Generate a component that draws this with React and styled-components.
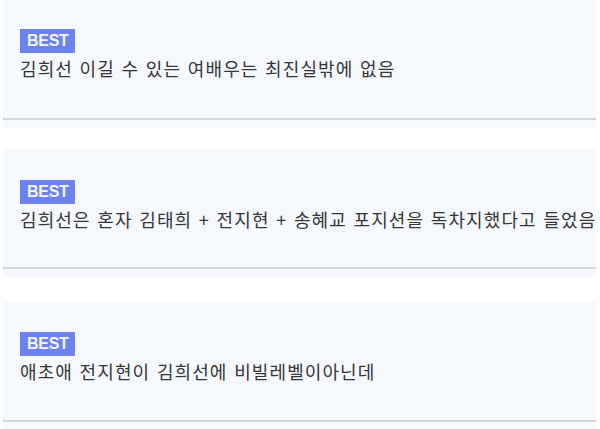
import React from "react";
import styled, { createGlobalStyle } from "styled-components";

const Global = createGlobalStyle`
  html, body { margin: 0; padding: 0; background: #ffffff; }
  body { font-family: "Noto Sans CJK KR", "Noto Sans", sans-serif; }
`;

const List = styled.div`
  display: flex;
  flex-direction: column;
  padding: 0 4px 0 3px;
`;

const Card = styled.section`
  margin-top: ${(p) => p.$gap}px;
  background: #f5f8fd;
  padding-bottom: 8px;
`;

const Body = styled.div`
  height: 120px;
  box-sizing: border-box;
  padding: ${(p) => p.$top}px 17px 0;
  border-bottom: 2px solid #d5d7db;
  display: flex;
  flex-direction: column;
  align-items: flex-start;
`;

const Badge = styled.span`
  display: inline-block;
  background: #6d82f1;
  color: #f4f6ff;
  font-family: "Liberation Sans", Arial, sans-serif;
  font-weight: 700;
  font-size: 16px;
  line-height: 24px;
  padding: 0 7px;
  letter-spacing: -0.3px;
`;

const Text = styled.p`
  margin: 3px 0 0;
  font-family: "Noto Sans CJK KR", sans-serif;
  font-size: 18px;
  line-height: 24px;
  color: #363636;
  letter-spacing: 1.1px;
  word-spacing: 1.5px;
  white-space: nowrap;
`;

const items = [
  { gap: 0, top: 29, text: "김희선 이길 수 있는 여배우는 최진실밖에 없음" },
  { gap: 21, top: 31, text: "김희선은 혼자 김태희 + 전지현 + 송혜교 포지션을 독차지했다고 들었음" },
  { gap: 25, top: 30, text: "애초애 전지현이 김희선에 비빌레벨이아닌데" },
];

export default function App() {
  return (
    <>
      <Global />
      <List>
        {items.map((it, i) => (
          <Card key={i} $gap={it.gap}>
            <Body $top={it.top}>
              <Badge>BEST</Badge>
              <Text>{it.text}</Text>
            </Body>
          </Card>
        ))}
      </List>
    </>
  );
}
